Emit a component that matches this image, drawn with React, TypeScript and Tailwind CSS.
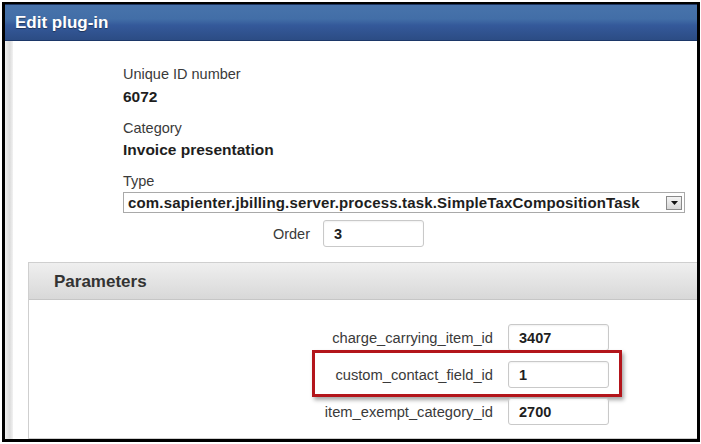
import React from "react";

const font = { fontFamily: '"Liberation Sans", Arial, sans-serif' };

function Field({ value }: { value: string }) {
  return (
    <div className="w-[101px] h-[27px] border border-[#c9c9c9] rounded-[3px] bg-white shadow-[inset_0_1px_2px_rgba(0,0,0,0.06)] flex items-center pl-[10px] pt-[3px] text-[14.5px] font-bold text-[#1e1e1e]">
      {value}
    </div>
  );
}

function ParamRow({ label, value, highlight }: { label: string; value: string; highlight?: boolean }) {
  return (
    <div className="relative flex items-center h-[27px]">
      <div className="w-[464px] text-right text-[14.7px] text-[#3a3a3a] leading-[20px]">{label}</div>
      <div className="ml-[15px]">
        <Field value={value} />
      </div>
      {highlight && (
        <div className="absolute left-[283px] top-[-11px] w-[310px] h-[47px] border-[3px] border-[#b3151b] shadow-[2px_3px_4px_rgba(0,0,0,0.35)]" />
      )}
    </div>
  );
}

export default function App() {
  return (
    <div className="w-[701px] h-[444px] bg-white pt-[2px] pl-[2px] pr-[1px] pb-[2px]" style={font}>
      <div className="h-full flex flex-col border-black border-l-[3px] border-t-[2px] border-r-[3px] border-b-[3px]">
        <div className="h-[37px] shrink-0 border-t border-t-[#1b3360] border-b border-b-[#1c3768] bg-[linear-gradient(to_bottom,#4873ab_0%,#426ea7_40%,#34599a_58%,#2c4c84_100%)] flex items-center pl-[10px]">
          <span className="text-white font-bold text-[17px] leading-none [text-shadow:0_1px_1px_rgba(0,0,0,0.4)]">Edit plug-in</span>
        </div>
        <div className="flex flex-1 min-h-0">
          <div className="w-[8px] shrink-0 bg-[linear-gradient(to_right,#f0f0f0,#dcdcdc_60%,#f2f2f2)]" />
          <div className="w-[15px] shrink-0" />
          <div className="flex-1 flex flex-col pt-[23px]">
            <div className="pl-[95px] text-[14.5px] text-[#3a3a3a]">
              <div className="leading-[20px]">Unique ID number</div>
              <div className="leading-[20px] mt-[3px] font-bold text-[15.5px] text-[#1e1e1e]">6072</div>
              <div className="leading-[20px] mt-[11px]">Category</div>
              <div className="leading-[20px] mt-[2px] font-bold text-[15.5px] text-[#1e1e1e]">Invoice presentation</div>
              <div className="leading-[20px] mt-[11px]">Type</div>
              <div className="mt-[1px] w-[562px] h-[21px] border border-[#a9a9a9] bg-white flex items-center pl-[4px] pr-[2px]">
                <span className="flex-1 font-bold text-[15px] text-[#1e1e1e] leading-none tracking-[0.17px]">
                  com.sapienter.jbilling.server.process.task.SimpleTaxCompositionTask
                </span>
                <div className="w-[16px] h-[14px] border border-[#8a8a8a] bg-[linear-gradient(to_bottom,#f4f4f4,#d6d6d6)] flex items-center justify-center">
                  <svg width="7" height="4" viewBox="0 0 7 4">
                    <path d="M0 0H7L3.5 4Z" fill="#111" />
                  </svg>
                </div>
              </div>
              <div className="mt-[7px] flex items-center">
                <div className="w-[187px] text-right leading-[20px]">Order</div>
                <div className="ml-[13px]">
                  <Field value="3" />
                </div>
              </div>
            </div>
            <div className="mt-[15px] flex-1 flex flex-col border border-[#cfcfcf] border-r-0">
              <div className="h-[37px] shrink-0 border-b border-[#c6c6c6] bg-[linear-gradient(to_bottom,#efefef,#d8d8d8)] flex items-center pl-[25px]">
                <span className="font-bold text-[17px] text-[#333] leading-none">Parameters</span>
              </div>
              <div className="flex flex-col gap-[10px] pt-[24px]">
                <ParamRow label="charge_carrying_item_id" value="3407" />
                <ParamRow label="custom_contact_field_id" value="1" highlight />
                <ParamRow label="item_exempt_category_id" value="2700" />
              </div>
            </div>
          </div>
        </div>
      </div>
    </div>
  );
}
